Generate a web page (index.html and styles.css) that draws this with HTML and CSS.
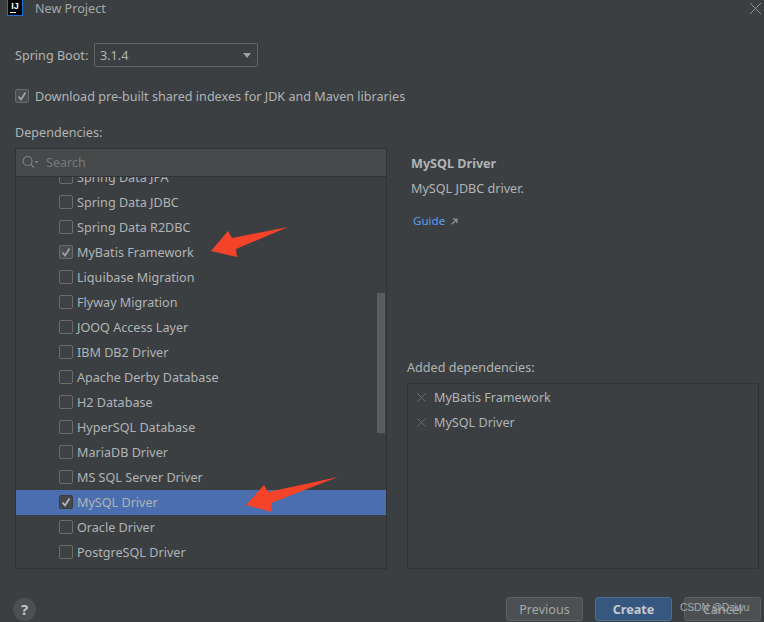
FILE: index.html
```html
<!DOCTYPE html>
<html lang="en">
<head>
    <meta charset="UTF-8">
    <meta name="viewport" content="width=device-width, initial-scale=1.0">
    <title>New Project</title>
    <link rel="stylesheet" href="styles.css">
</head>
<body>

<div class="dialog">
    <div class="title-bar">
        <span class="logo"><span class="logo-text">IJ</span></span>
        <span class="title">New Project</span>
        <svg class="close-icon" width="13" height="13" viewBox="0 0 13 13"><path d="M1 1 L12 12 M12 1 L1 12" stroke="#8c8f91" stroke-width="1" fill="none"/></svg>
    </div>

    <div class="boot-row">
        <label>Spring Boot:</label>
        <div class="select">
            <span>3.1.4</span>
            <span class="select-arrow"></span>
        </div>
    </div>

    <div class="check-row">
        <span class="checkbox checked"><svg width="14" height="14" viewBox="0 0 14 14"><path d="M3.5 7.5 L6 10.5 L10.5 3.5" stroke="#a0a3a5" stroke-width="1.8" fill="none"/></svg></span>
        <span>Download pre-built shared indexes for JDK and Maven libraries</span>
    </div>

    <div class="section-label">Dependencies:</div>

    <div class="main">
        <div class="left-panel">
            <div class="search">
                <svg width="22" height="16" viewBox="0 0 22 16"><circle cx="5.5" cy="7" r="4.5" stroke="#7f8385" stroke-width="1.1" fill="none"/><path d="M8.8 10.3 L12 13.5" stroke="#7f8385" stroke-width="1.4"/><path d="M12.5 7 L16.5 7 L14.5 9.5 Z" fill="#7f8385"/></svg>
                <span class="search-text">Search</span>
            </div>
            <div class="list">
                <div class="list-inner">
                    <div class="row"><span class="checkbox"></span>Spring Data JPA</div>
                    <div class="row"><span class="checkbox"></span>Spring Data JDBC</div>
                    <div class="row"><span class="checkbox"></span>Spring Data R2DBC</div>
                    <div class="row"><span class="checkbox checked"><svg width="14" height="14" viewBox="0 0 14 14"><path d="M3.5 7.5 L6 10.5 L10.5 3.5" stroke="#a0a3a5" stroke-width="1.8" fill="none"/></svg></span>MyBatis Framework</div>
                    <div class="row"><span class="checkbox"></span>Liquibase Migration</div>
                    <div class="row"><span class="checkbox"></span>Flyway Migration</div>
                    <div class="row"><span class="checkbox"></span>JOOQ Access Layer</div>
                    <div class="row"><span class="checkbox"></span>IBM DB2 Driver</div>
                    <div class="row"><span class="checkbox"></span>Apache Derby Database</div>
                    <div class="row"><span class="checkbox"></span>H2 Database</div>
                    <div class="row"><span class="checkbox"></span>HyperSQL Database</div>
                    <div class="row"><span class="checkbox"></span>MariaDB Driver</div>
                    <div class="row"><span class="checkbox"></span>MS SQL Server Driver</div>
                    <div class="row selected"><span class="checkbox checked"><svg width="14" height="14" viewBox="0 0 14 14"><path d="M3.5 7.5 L6 10.5 L10.5 3.5" stroke="#b4b7b9" stroke-width="1.8" fill="none"/></svg></span>MySQL Driver</div>
                    <div class="row"><span class="checkbox"></span>Oracle Driver</div>
                    <div class="row"><span class="checkbox"></span>PostgreSQL Driver</div>
                </div>
                <div class="scrollbar"></div>
            </div>
        </div>

        <div class="right-panel">
            <div class="details">
                <div class="details-name">MySQL Driver</div>
                <div class="details-desc">MySQL JDBC driver.</div>
                <div class="guide">
                    <span>Guide</span>
                    <svg width="7" height="7" viewBox="0 0 9 9"><path d="M1 8 L7 2 M2.5 1.5 L7.5 1.5 L7.5 6.5" stroke="#8c9094" stroke-width="1.8" fill="none"/></svg>
                </div>
            </div>
            <div class="added-label">Added dependencies:</div>
            <div class="added-box">
                <div class="added-row">
                    <svg width="9" height="9" viewBox="0 0 9 9"><path d="M0.5 0.5 L8.5 8.5 M8.5 0.5 L0.5 8.5" stroke="#65696b" stroke-width="1" fill="none"/></svg>
                    <span>MyBatis Framework</span>
                </div>
                <div class="added-row">
                    <svg width="9" height="9" viewBox="0 0 9 9"><path d="M0.5 0.5 L8.5 8.5 M8.5 0.5 L0.5 8.5" stroke="#65696b" stroke-width="1" fill="none"/></svg>
                    <span>MySQL Driver</span>
                </div>
            </div>
        </div>
    </div>

    <div class="footer">
        <span class="help">?</span>
        <div class="buttons">
            <button class="btn">Previous</button>
            <button class="btn primary">Create</button>
            <button class="btn">Cancel</button>
        </div>
    </div>
</div>

<!-- red annotation arrows drawn on top of the screenshot -->
<svg class="arrows" width="764" height="622" viewBox="0 0 764 622">
    <polygon points="211,251 228,231 232,238 288,227 236,249 237,257" fill="#f44328"/>
    <polygon points="246,505 264,485 268,492 338,477 271,503 272,512" fill="#f44328"/>
</svg>
<div class="watermark">CSDN @Dziwu</div>

</body>
</html>
```
FILE: styles.css
```css
html, body {
    margin: 0;
    height: 100%;
}
body {
    font-family: "Noto Sans", sans-serif;
    font-size: 12.6px;
    color: #b0b4b6;
    background-color: #3c3f41;
    overflow: hidden;
    position: relative;
}
.dialog {
    display: flex;
    flex-direction: column;
    padding: 0 3px 0 15px;
    height: 622px;
    box-sizing: border-box;
}
.title-bar {
    display: flex;
    align-items: center;
    height: 16px;
    margin-left: -8px;
    margin-right: -1px;
}
.logo {
    width: 14px;
    height: 15px;
    background-color: #000;
    border: 1px solid #1a73d8;
    border-top: none;
    margin-right: 12px;
}
.logo-text {
    display: block;
    color: #fff;
    font-family: "Liberation Sans", sans-serif;
    font-size: 9px;
    font-weight: bold;
    line-height: 8px;
    text-align: center;
    padding-top: 2px;
    height: 8px;
}
.logo-text::after {
    content: "";
    display: block;
    width: 6px;
    height: 1px;
    background-color: #fff;
    margin: 2px 0 0 2px;
}
.title {
    flex: 1;
    color: #a4a8aa;
}
.boot-row {
    display: flex;
    align-items: center;
    margin-top: 27px;
    height: 24px;
}
.boot-row label {
    width: 79px;
}
.select {
    display: flex;
    align-items: center;
    justify-content: space-between;
    box-sizing: border-box;
    width: 164px;
    height: 24px;
    padding: 0 6px 0 5px;
    border: 1px solid #646464;
    border-radius: 2px;
    background-color: #3c3f41;
}
.select-arrow {
    width: 0;
    height: 0;
    border-left: 4px solid transparent;
    border-right: 4px solid transparent;
    border-top: 5px solid #a0a3a5;
}
.check-row {
    display: flex;
    align-items: center;
    gap: 6px;
    height: 20px;
    margin-top: 19px;
}
.checkbox {
    display: block;
    box-sizing: border-box;
    flex: none;
    width: 14px;
    height: 14px;
    border: 1px solid #6b6b6b;
    border-radius: 2px;
    background-color: #3f4244;
}
.checkbox svg {
    display: block;
    margin: -1px;
}
.checkbox.checked {
    background-color: #4a4e50;
}
.section-label {
    height: 20px;
    line-height: 20px;
    margin-top: 17px;
}
.main {
    display: grid;
    grid-template-columns: 372px 352px;
    gap: 20px;
    margin-top: 5px;
    height: 421px;
}
.left-panel {
    display: flex;
    flex-direction: column;
    box-sizing: border-box;
    border: 1px solid #323232;
    min-height: 0;
}
.search {
    display: flex;
    align-items: center;
    flex: none;
    height: 28px;
    padding: 0 0 1px 6px;
    background-color: #45494a;
    border-bottom: 1px solid #323232;
    box-sizing: border-box;
}
.search-text {
    color: #75797b;
    margin-left: 2px;
}
.list {
    flex: 1;
    overflow: hidden;
    position: relative;
}
.list-inner {
    margin-top: -12px;
}
.row {
    display: flex;
    align-items: center;
    gap: 4px;
    box-sizing: border-box;
    height: 25px;
    padding: 0 0 1px 43px;
}
.row.selected {
    background-color: #4b6eaf;
}
.row.selected .checkbox {
    background-color: #45484a;
    border-color: #3a3d3f;
}
.scrollbar {
    position: absolute;
    right: 1px;
    top: 116px;
    width: 8px;
    height: 140px;
    background-color: #595b5d;
}
.right-panel {
    display: flex;
    flex-direction: column;
}
.details {
    padding: 6px 0 0 4px;
    flex: 1;
}
.details-name {
    font-weight: bold;
    line-height: 20px;
}
.details-desc {
    line-height: 20px;
    margin-top: 5px;
}
.guide {
    display: flex;
    align-items: center;
    gap: 6px;
    line-height: 20px;
    margin-top: 12px;
    padding-left: 2px;
    color: #589df6;
    font-size: 11.6px;
}
.added-label {
    line-height: 20px;
    padding-top: 1px;
    margin-bottom: 5px;
}
.added-box {
    box-sizing: border-box;
    height: 186px;
    border: 1px solid #323232;
    padding-top: 1px;
}
.added-row {
    display: flex;
    align-items: center;
    gap: 8px;
    height: 25px;
    padding-left: 9px;
}
.footer {
    display: flex;
    align-items: center;
    justify-content: space-between;
    height: 24px;
    margin-top: 28px;
}
.help {
    width: 23px;
    height: 23px;
    margin-left: -2px;
    border-radius: 50%;
    background-color: #4c5052;
    color: #c4c7c9;
    font-weight: bold;
    font-size: 15px;
    line-height: 23px;
    text-align: center;
}
.buttons {
    display: flex;
    gap: 12px;
}
.btn {
    box-sizing: border-box;
    width: 77px;
    height: 24px;
    padding: 0;
    font-family: "Noto Sans", sans-serif;
    font-size: 12.6px;
    color: #a4a8aa;
    background-color: #4c5052;
    border: 1px solid #5e6060;
    border-radius: 3px;
}
.btn.primary {
    color: #c6cacc;
    font-weight: bold;
    background-color: #365880;
    border-color: #4c708c;
}
.arrows {
    position: absolute;
    left: 0;
    top: 0;
}
.watermark {
    position: absolute;
    left: 680px;
    top: 601px;
    font-family: "Liberation Sans", sans-serif;
    font-size: 10.5px;
    letter-spacing: -0.25px;
    color: #a6a8aa;
}
```
